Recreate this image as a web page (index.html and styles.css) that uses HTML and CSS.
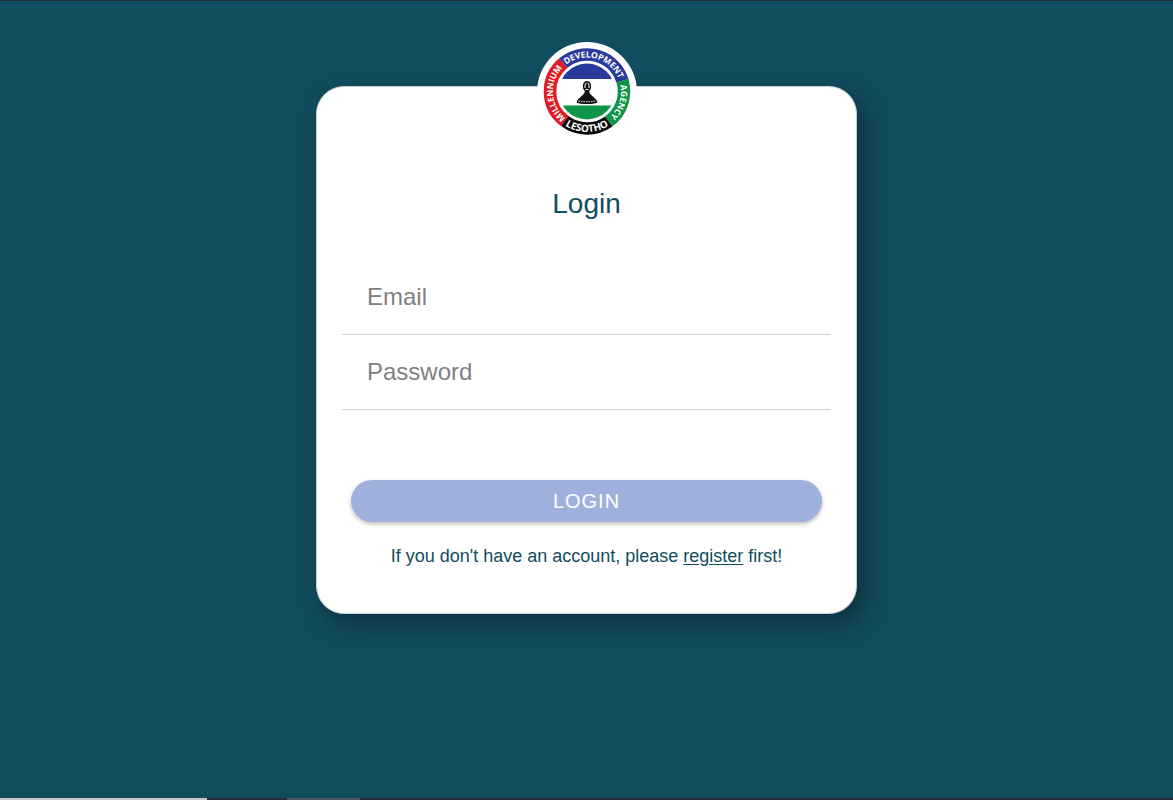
FILE: index.html
```
<!DOCTYPE html>
<html lang="en">
<head>
    <meta charset="UTF-8">
    <meta name="viewport" content="width=device-width, initial-scale=1.0">
    <title>Login</title>
    <link rel="stylesheet" href="styles.css">
</head>
<body>
    <main class="page">
        <div class="card">
            <div class="logo">
                <svg viewBox="0 0 200 200" role="img" aria-label="Millennium Development Agency Lesotho">
                    <defs>
                        <clipPath id="flagClip"><circle cx="100" cy="99" r="56"/></clipPath>
                        <path id="arcLeft" d="M100 167 A68 68 0 0 1 100 31"/>
                        <path id="arcTop" d="M35 119 A68 68 0 1 1 165 119"/>
                        <path id="arcRight" d="M100 31 A68 68 0 0 1 100 167"/>
                        <path id="arcBottom" d="M19 99 A81 81 0 0 0 181 99"/>
                    </defs>
                    <!-- coloured ring -->
                    <g fill="none" stroke-width="25" transform="translate(0 -1)">
                        <path stroke="#e01b24" d="M55.5 159.1 A74 74 0 0 1 52.4 43.3"/>
                        <path stroke="#2a3a9c" d="M52.4 43.3 A74 74 0 0 1 170.8 78.4"/>
                        <path stroke="#0f9548" d="M170.8 78.4 A74 74 0 0 1 143.5 159.9"/>
                        <path stroke="#0a0a0a" d="M143.5 159.9 A74 74 0 0 1 55.5 159.1"/>
                    </g>
                    <g class="logo-text">
                        <text><textPath href="#arcLeft" startOffset="48%">MILLENNIUM</textPath></text>
                        <text><textPath href="#arcTop" startOffset="57%">DEVELOPMENT</textPath></text>
                        <text><textPath href="#arcRight" startOffset="60%">AGENCY</textPath></text>
                        <text class="logo-country"><textPath href="#arcBottom" startOffset="50%">LESOTHO</textPath></text>
                    </g>
                    <!-- flag with the mokorotlo hat -->
                    <g clip-path="url(#flagClip)">
                        <rect x="40" y="40" width="120" height="120" fill="#fff"/>
                        <rect x="40" y="40" width="120" height="34" fill="#2a3a9c"/>
                        <rect x="40" y="127" width="120" height="35" fill="#0f9548"/>
                    </g>
                    <path fill="#111" d="M96 99 L93 95 C90 86 93 78 100 78 C107 78 110 86 107 95 L104 99 C107 108 119 112 121 121 C113 125 87 125 79 121 C81 112 93 108 96 99 Z"/>
                    <path fill="none" stroke="#fff" stroke-width="2" d="M96 92 V86 Q97 82 99 82 M104 92 V86 Q103 82 101 82 M97 95 H103"/>
                    <path fill="none" stroke="#fff" stroke-width="2" stroke-dasharray="3 2" d="M83 118 Q100 121 117 118"/>
                </svg>
            </div>
            <h1>Login</h1>
            <form class="login-form">
                <input type="email" id="email" placeholder="Email" aria-label="Email">
                <input type="password" id="password" placeholder="Password" aria-label="Password">
                <button type="submit" class="login-button">LOGIN</button>
            </form>
            <p class="register">If you don't have an account, please <a href="#">register</a> first!</p>
        </div>
    </main>
    <div class="bottom-bar">
        <div class="bar-search"></div>
        <div class="bar-item"></div>
    </div>
</body>
</html>
```

FILE: styles.css
```
* {
    box-sizing: border-box;
}
body {
    margin: 0;
    min-height: 100vh;
    display: flex;
    flex-direction: column;
    background-color: #124c5f;
    border-top: 1px solid #222c35;
    font-family: "Liberation Sans", Arial, sans-serif;
    color: #124c5f;
}
.page {
    flex: 1;
    padding: 85px 20px 40px;
}
.card {
    width: 100%;
    max-width: 541px;
    margin: 0 auto;
    padding: 0 25px 45px;
    background-color: #fff;
    border: 1px solid #c3ced3;
    border-radius: 28px;
    box-shadow: 8px 10px 24px rgba(0, 0, 0, 0.35);
    text-align: center;
}
.logo {
    width: 100px;
    height: 100px;
    margin: -45px auto 0;
    background-color: #fff;
    border-radius: 50%;
}
.logo svg {
    display: block;
    width: 100%;
}
.logo-text {
    font-family: "Open Sans", sans-serif;
    font-size: 17px;
    font-weight: 700;
    fill: #fff;
    text-anchor: middle;
}
.logo-country {
    font-size: 20px;
}
h1 {
    margin: 46px 0 40px;
    font-size: 28px;
    line-height: 32px;
    font-weight: 400;
}
.login-form {
    display: flex;
    flex-direction: column;
}
.login-form input {
    width: 100%;
    height: 75px;
    padding: 0 25px;
    border: none;
    border-bottom: 1px solid #d2d2d2;
    background: none;
    font-family: inherit;
    font-size: 24px;
    color: #124c5f;
    outline: none;
}
.login-form input::placeholder {
    color: #808080;
    opacity: 1;
}
.login-button {
    height: 42px;
    margin: 70px 9px 0;
    border: none;
    border-radius: 21px;
    background-color: #a0b0dd;
    box-shadow: 0 2px 4px rgba(0, 0, 0, 0.25);
    font-family: inherit;
    font-size: 20px;
    letter-spacing: 1px;
    color: #fff;
    cursor: pointer;
}
.register {
    margin: 22px 0 0;
    font-size: 18px;
    line-height: 24px;
}
.register a {
    color: inherit;
    text-underline-offset: 2px;
}
.bottom-bar {
    display: flex;
    gap: 80px;
    height: 2px;
    background-color: #222c3a;
}
.bar-search {
    width: 207px;
    background-color: #c8c8c8;
}
.bar-item {
    width: 73px;
    background-color: #4c5866;
}
```
